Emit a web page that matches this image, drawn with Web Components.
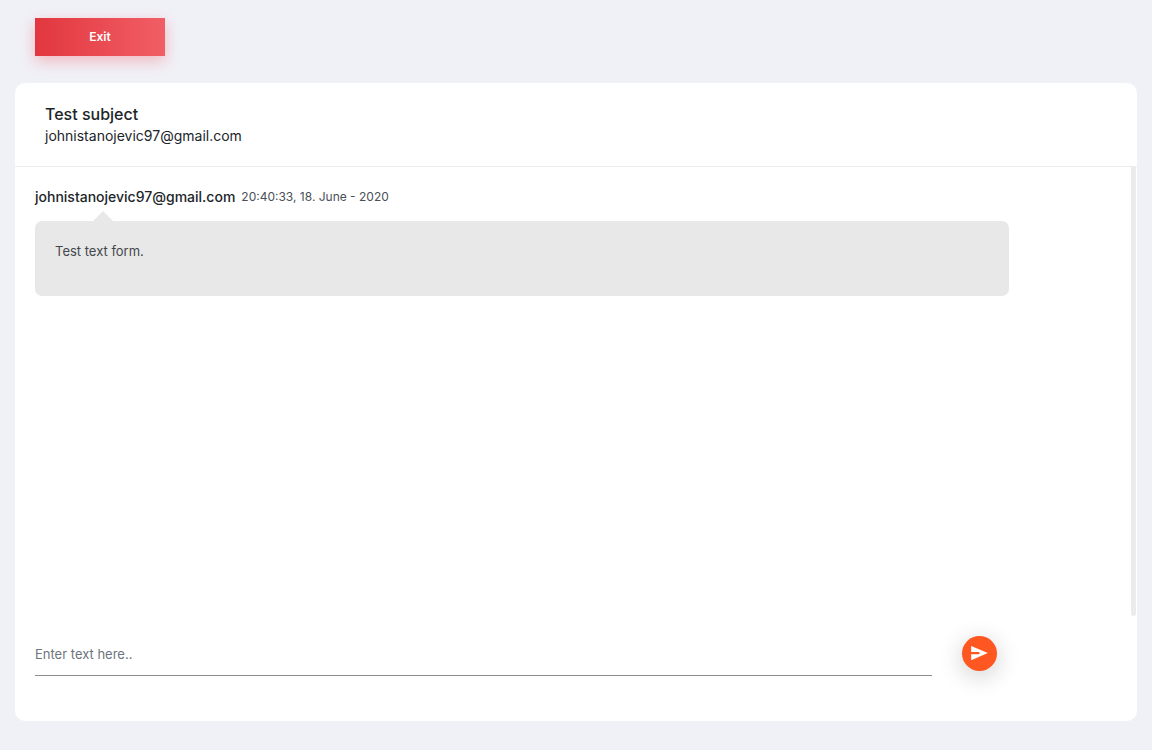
<!DOCTYPE html>
<html lang="en">
<head>
<meta charset="utf-8">
<meta name="viewport" content="width=device-width, initial-scale=1">
<title>Test subject</title>
<style>
  body { margin: 0; background: #f0f1f7; color: #212529; font: 400 13px/20px Inter, "Open Sans", sans-serif; }
</style>
</head>
<body>
<ticket-page>
  <exit-button slot="actions">Exit</exit-button>
  <ticket-card>
    <ticket-header slot="header">
      <span slot="subject">Test subject</span>
      <span slot="email">johnistanojevic97@gmail.com</span>
    </ticket-header>
    <chat-message>
      <span slot="author">johnistanojevic97@gmail.com</span>
      <time slot="time" datetime="2020-06-18T20:40:33">20:40:33, 18. June - 2020</time>
      Test text form.
    </chat-message>
    <reply-form slot="footer"></reply-form>
  </ticket-card>
</ticket-page>

<template id="ticket-page">
  <style>
    :host { display: flex; flex-direction: column; gap: 27px; box-sizing: border-box; min-height: 100vh; padding: 18px 15px 29px; }
    .actions { padding-left: 20px; }
    ::slotted(ticket-card) { flex: 1; }
  </style>
  <div class="actions"><slot name="actions"></slot></div>
  <slot></slot>
</template>

<template id="exit-button">
  <style>
    :host { display: block; }
    button { display: block; width: 130px; height: 38px; padding: 0; border: 0; cursor: pointer; color: #fff;
      font: inherit; font-size: 12px; font-weight: 600; background: linear-gradient(90deg, #e2373f, #f15e65);
      box-shadow: 0 5px 15px rgba(240, 80, 90, .35); }
  </style>
  <button type="button"><slot></slot></button>
</template>

<template id="ticket-card">
  <style>
    :host { display: flex; flex-direction: column; background: #fff; border-radius: 10px; }
    .messages { position: relative; flex: 1; min-height: 200px; padding: 20px; }
    .track { position: absolute; top: 0; bottom: 0; right: 1px; width: 5px; background: #ebebeb; border-radius: 0 0 3px 3px; }
  </style>
  <slot name="header"></slot>
  <div class="messages"><slot></slot><div class="track"></div></div>
  <slot name="footer"></slot>
</template>

<template id="ticket-header">
  <style>
    :host { display: block; padding: 20px 30px; border-bottom: 1px solid #ececee; }
    h1 { margin: 0; font-size: 16px; font-weight: 500; line-height: 23px; }
    p { margin: 0; font-size: 14px; }
  </style>
  <h1><slot name="subject"></slot></h1>
  <p><slot name="email"></slot></p>
</template>

<template id="chat-message">
  <style>
    :host { display: block; width: 90%; }
    header { display: flex; flex-wrap: wrap; gap: 0 6px; margin-bottom: 14px; }
    .author { font-size: 14px; font-weight: 500; }
    .time { font-size: 12px; color: #495057; }
    .bubble { position: relative; box-sizing: border-box; min-height: 75px; padding: 20px; background: #e8e8e8; border-radius: 7px; color: #43474b; }
    .bubble::before { content: ""; position: absolute; left: 58px; top: -10px; width: 20px; height: 10px; background: inherit;
      clip-path: polygon(50% 0, 100% 100%, 0 100%); }
  </style>
  <header>
    <span class="author"><slot name="author"></slot></span>
    <span class="time"><slot name="time"></slot></span>
  </header>
  <div class="bubble"><slot></slot></div>
</template>

<template id="reply-form">
  <style>
    :host { display: block; padding: 20px 140px 45px 20px; }
    form { display: flex; align-items: flex-start; gap: 30px; }
    input { flex: 1; min-width: 0; box-sizing: border-box; height: 40px; padding: 0 0 4px; border: 0; border-bottom: 1px solid #8d8d90;
      border-radius: 0; background: transparent; color: #212529; font: inherit; outline: none; }
    input::placeholder { color: #6c757d; opacity: 1; }
    button { display: flex; align-items: center; justify-content: center; width: 35px; height: 35px; padding: 0; border: 0;
      border-radius: 50%; background: #ff5722; cursor: pointer; box-shadow: 0 5px 25px rgba(0, 0, 0, .2); }
    svg { display: block; width: 19px; height: 19px; fill: #fff; }
  </style>
  <form>
    <input type="text" placeholder="Enter text here.." aria-label="Enter text here">
    <button type="submit" aria-label="Send">
      <svg viewBox="0 0 24 24" aria-hidden="true"><path d="M1.5 20.5L22.5 11.5 1.5 2.5v7.5h9l1.5.5v2l-1.5.5h-9z"/></svg>
    </button>
  </form>
</template>

<script>
  class TemplateElement extends HTMLElement {
    constructor() {
      super();
      const template = document.getElementById(this.localName);
      this.attachShadow({ mode: "open" }).append(template.content.cloneNode(true));
    }
  }

  class TicketPage extends TemplateElement {}
  class ExitButton extends TemplateElement {}
  class TicketCard extends TemplateElement {}
  class TicketHeader extends TemplateElement {}
  class ChatMessage extends TemplateElement {}
  class ReplyForm extends TemplateElement {
    connectedCallback() {
      this.shadowRoot.querySelector("form").addEventListener("submit", (event) => event.preventDefault());
    }
  }

  customElements.define("ticket-page", TicketPage);
  customElements.define("exit-button", ExitButton);
  customElements.define("ticket-card", TicketCard);
  customElements.define("ticket-header", TicketHeader);
  customElements.define("chat-message", ChatMessage);
  customElements.define("reply-form", ReplyForm);
</script>
</body>
</html>
